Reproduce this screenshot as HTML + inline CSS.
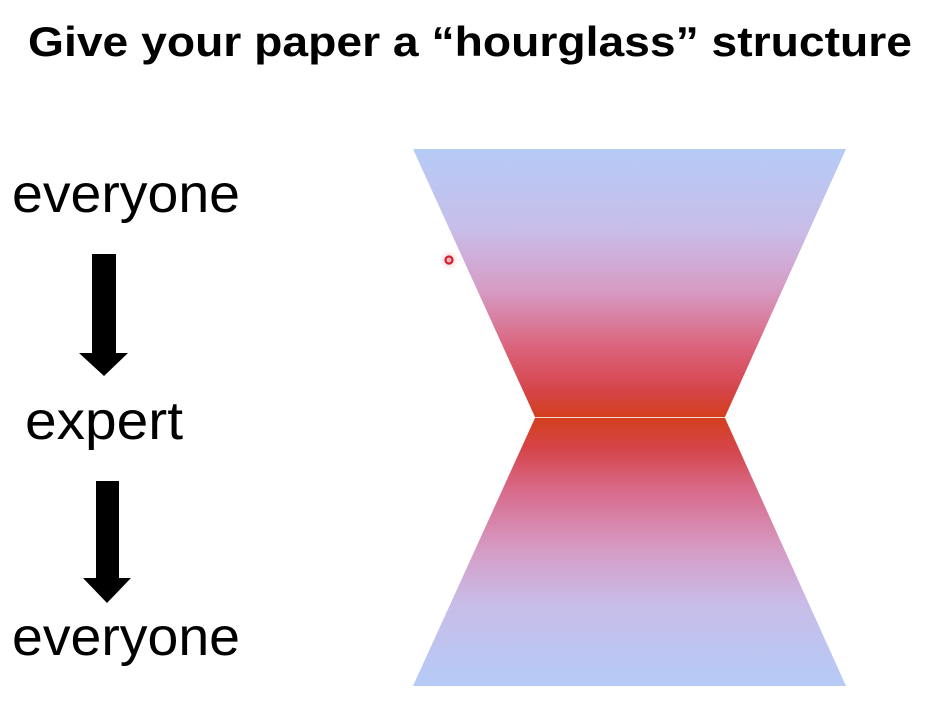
<!DOCTYPE html>
<html><head><meta charset="utf-8"><style>html,body{margin:0;padding:0;background:#fff;}svg{display:block}</style></head>
<body>
<svg width="932" height="710" viewBox="0 0 932 710" xmlns="http://www.w3.org/2000/svg">
<defs>
<linearGradient id="gt" x1="0" y1="149" x2="0" y2="417" gradientUnits="userSpaceOnUse">
<stop offset="0" stop-color="#b5cbf6"/>
<stop offset="0.3" stop-color="#c8bde9"/>
<stop offset="0.52" stop-color="#d59dc6"/>
<stop offset="0.75" stop-color="#db6179"/>
<stop offset="0.9" stop-color="#d5454a"/>
<stop offset="1" stop-color="#d43f1c"/>
</linearGradient>
<linearGradient id="gb" x1="0" y1="417" x2="0" y2="686" gradientUnits="userSpaceOnUse">
<stop offset="0" stop-color="#d43f1c"/>
<stop offset="0.12" stop-color="#d5454a"/>
<stop offset="0.28" stop-color="#d86c8d"/>
<stop offset="0.5" stop-color="#d59dc6"/>
<stop offset="0.7" stop-color="#c8bde9"/>
<stop offset="1" stop-color="#b5cbf6"/>
</linearGradient>
<radialGradient id="glow"><stop offset="0" stop-color="#f0a8b0"/><stop offset="1" stop-color="#f8dde0" stop-opacity="0"/></radialGradient>
</defs>
<text x="28" y="56" font-family="Liberation Sans, sans-serif" font-weight="bold" font-size="42" textLength="884" lengthAdjust="spacingAndGlyphs" fill="#000">Give your paper a “hourglass” structure</text>
<polygon points="413,149 846,149 725,417 535,417" fill="url(#gt)"/>
<polygon points="535,418 725,418 846,686 413,686" fill="url(#gb)"/>
<line x1="535" y1="417.5" x2="725" y2="417.5" stroke="#f0d8d0" stroke-width="1"/>
<circle cx="449" cy="260" r="10" fill="url(#glow)"/>
<circle cx="449" cy="260" r="3.5" fill="none" stroke="#d02030" stroke-width="2.2"/>
<text x="12" y="212" font-family="Liberation Sans, sans-serif" font-size="54" textLength="228" lengthAdjust="spacingAndGlyphs" fill="#000">everyone</text>
<text x="25" y="439" font-family="Liberation Sans, sans-serif" font-size="54" textLength="158" lengthAdjust="spacingAndGlyphs" fill="#000">expert</text>
<text x="12" y="655" font-family="Liberation Sans, sans-serif" font-size="54" textLength="228" lengthAdjust="spacingAndGlyphs" fill="#000">everyone</text>
<polygon points="92,254 116,254 116,353 128,353 104,376 79,353 92,353" fill="#000"/>
<polygon points="96,481 119,481 119,578 131,578 107,603 83,578 96,578" fill="#000"/>
</svg>
</body></html>
